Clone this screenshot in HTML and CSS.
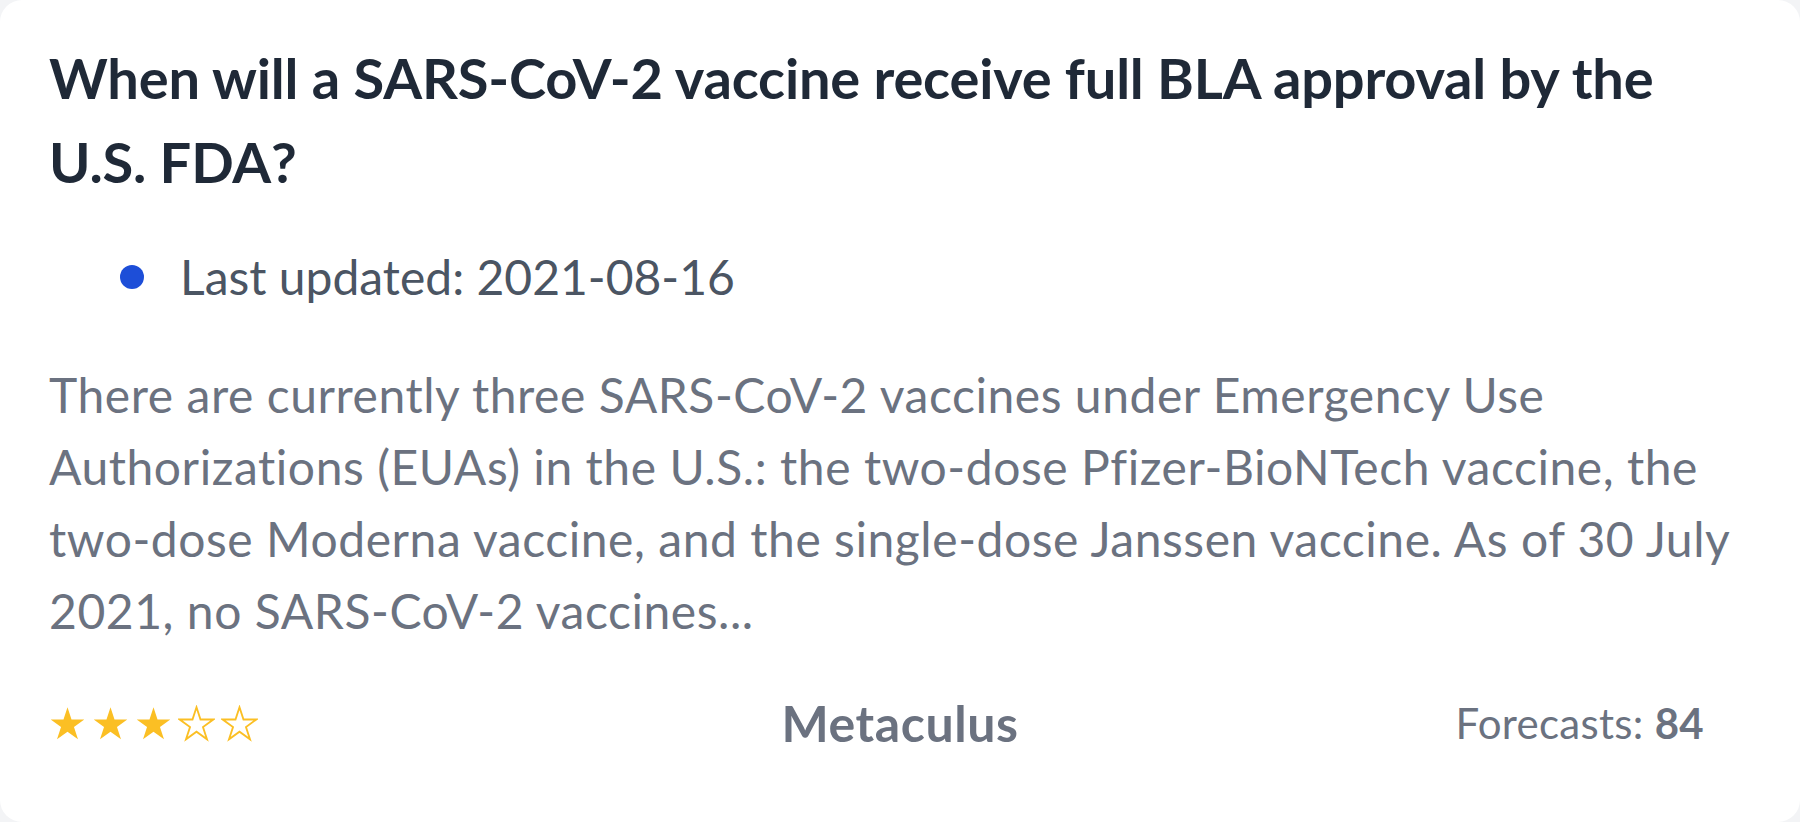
FILE: index.html
```html
<!DOCTYPE html>
<html lang="en">
<head>
<meta charset="utf-8">
<title>Question card</title>
<link rel="stylesheet" href="styles.css">
</head>
<body>
<div class="card">
  <h2 class="title">When will a SARS-CoV-2 vaccine receive full BLA approval by the U.S. FDA?</h2>
  <ul class="meta">
    <li class="meta-item"><span class="dot"></span>Last updated: 2021-08-16</li>
  </ul>
  <p class="desc">There are currently three SARS-CoV-2 vaccines under Emergency Use Authorizations (EUAs) in the U.S.: the two-dose Pfizer-BioNTech vaccine, the two-dose Moderna vaccine, and the single-dose Janssen vaccine. As of 30 July 2021, no SARS-CoV-2 vaccines...</p>
  <div class="footer">
    <div class="stars">
      <svg class="star" viewBox="0 0 24 24"><path class="full" d="M12 1.5l2.6 7.9h8.3l-6.7 4.9 2.6 7.9L12 17.3l-6.8 4.9 2.6-7.9-6.7-4.9h8.3z"/></svg>
      <svg class="star" viewBox="0 0 24 24"><path class="full" d="M12 1.5l2.6 7.9h8.3l-6.7 4.9 2.6 7.9L12 17.3l-6.8 4.9 2.6-7.9-6.7-4.9h8.3z"/></svg>
      <svg class="star" viewBox="0 0 24 24"><path class="full" d="M12 1.5l2.6 7.9h8.3l-6.7 4.9 2.6 7.9L12 17.3l-6.8 4.9 2.6-7.9-6.7-4.9h8.3z"/></svg>
      <svg class="star" viewBox="0 0 24 24"><path class="empty" d="M12 1.5l2.6 7.9h8.3l-6.7 4.9 2.6 7.9L12 17.3l-6.8 4.9 2.6-7.9-6.7-4.9h8.3z"/></svg>
      <svg class="star" viewBox="0 0 24 24"><path class="empty" d="M12 1.5l2.6 7.9h8.3l-6.7 4.9 2.6 7.9L12 17.3l-6.8 4.9 2.6-7.9-6.7-4.9h8.3z"/></svg>
    </div>
    <div class="source">Metaculus</div>
    <div class="count">Forecasts: <b>84</b></div>
  </div>
</div>
</body>
</html>
```
FILE: styles.css
```css
html, body {
  margin: 0;
  padding: 0;
  background: #f3f4f6;
}
body {
  font-family: "Lato", "Open Sans", sans-serif;
}
.card {
  box-sizing: border-box;
  width: 1800px;
  height: 822px;
  background: #ffffff;
  border-radius: 22px;
  padding: 36px 49px 0 49px;
}
.title {
  margin: 0;
  font-size: 56px;
  line-height: 84px;
  font-weight: 700;
  letter-spacing: -0.18px;
  color: #1f2937;
}
.meta {
  list-style: none;
  margin: 37px 0 0 0;
  padding: 0 0 0 71px;
}
.meta-item {
  display: flex;
  align-items: center;
  font-size: 48px;
  line-height: 72px;
  color: #4b5563;
}
.dot {
  width: 24px;
  height: 24px;
  border-radius: 50%;
  background: #1d4ed8;
  margin-right: 36px;
  flex: none;
}
.desc {
  margin: 46px 0 0 0;
  font-size: 48px;
  line-height: 72px;
  letter-spacing: 0.55px;
  color: #6b7280;
}
.footer {
  display: grid;
  grid-template-columns: 1fr auto 1fr;
  align-items: center;
  margin-top: 46px;
}
.stars {
  display: flex;
  gap: 6px;
}
.star {
  width: 37px;
  height: 37px;
}
.star .full {
  fill: #fbbf24;
}
.star .empty {
  fill: none;
  stroke: #fbbf24;
  stroke-width: 1.2;
}
.source {
  font-size: 50px;
  font-weight: 700;
  letter-spacing: 0.6px;
  color: #6b7280;
}
.count {
  justify-self: end;
  padding-right: 47px;
  font-size: 42px;
  letter-spacing: 0.3px;
  color: #6b7280;
}
.count b {
  font-weight: 700;
}
```
